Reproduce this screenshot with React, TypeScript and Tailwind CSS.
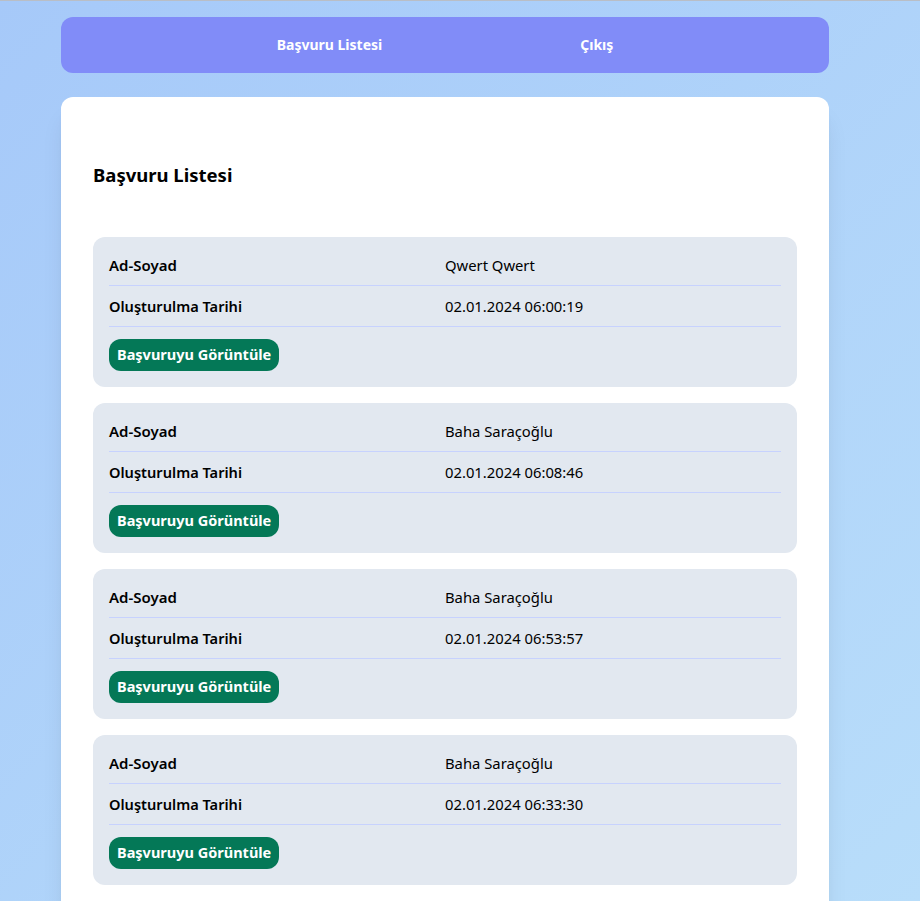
import React from "react";

const rows = [
  { name: "Qwert Qwert", date: "02.01.2024 06:00:19" },
  { name: "Baha Saraçoğlu", date: "02.01.2024 06:08:46" },
  { name: "Baha Saraçoğlu", date: "02.01.2024 06:53:57" },
  { name: "Baha Saraçoğlu", date: "02.01.2024 06:33:30" },
];

export default function App() {
  return (
    <div
      className="min-h-[901px] h-[901px] overflow-hidden border-t border-[#b9bec6] bg-gradient-to-br from-[#a6c9f9] to-[#b8ddfa] text-black"
      style={{ fontFamily: '"Segoe UI", "Noto Sans", "Open Sans", sans-serif' }}
    >
      <div className="ml-[61px] w-[768px] pt-4">
        <nav className="flex h-14 items-center justify-center gap-[198px] rounded-xl bg-[#818cf8] text-sm font-bold text-white">
          <span>Başvuru Listesi</span>
          <span>Çıkış</span>
        </nav>
        <main className="mt-6 rounded-xl bg-white px-8 pt-8 pb-8 shadow-xl">
          <h1 className="mt-8 mb-12 text-[18.5px] font-bold leading-7">Başvuru Listesi</h1>
          <div className="flex flex-col gap-4">
            {rows.map((r, i) => (
              <div key={i} className="rounded-xl bg-[#e2e8f0] px-4 pt-2 pb-4 text-[15px]">
                <div className="grid grid-cols-2 border-b border-[#c7d2fe] py-2 leading-6">
                  <span className="font-semibold">Ad-Soyad</span>
                  <span className="text-[14.8px]">{r.name}</span>
                </div>
                <div className="grid grid-cols-2 border-b border-[#c7d2fe] py-2 leading-6">
                  <span className="font-semibold text-[14.6px]">Oluşturulma Tarihi</span>
                  <span className="text-[14.8px]">{r.date}</span>
                </div>
                <button className="mt-3 h-8 rounded-xl bg-[#047857] px-2 text-[14.5px] font-bold text-white">
                  Başvuruyu Görüntüle
                </button>
              </div>
            ))}
          </div>
        </main>
      </div>
    </div>
  );
}
